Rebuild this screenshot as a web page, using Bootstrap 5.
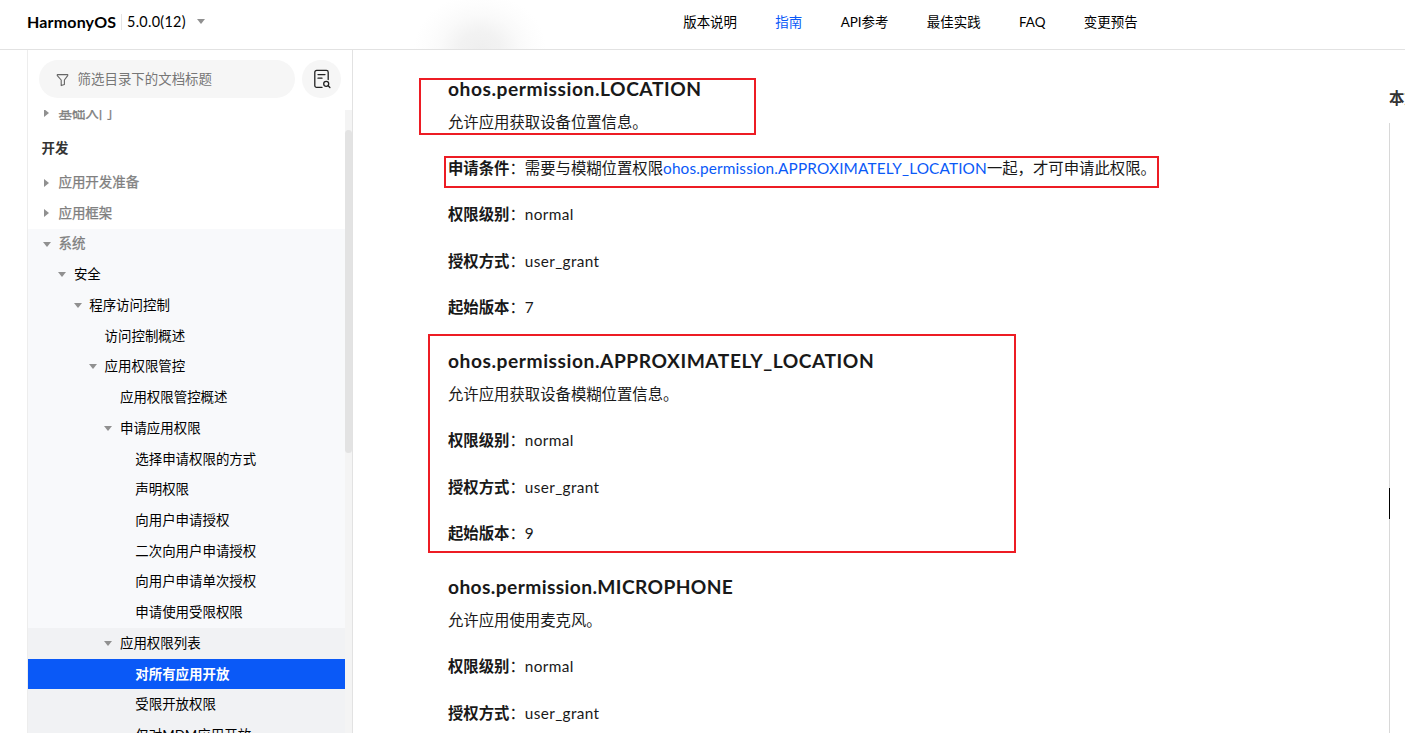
<!DOCTYPE html>
<html lang="zh-CN">
<head>
<meta charset="utf-8">
<meta name="viewport" content="width=device-width, initial-scale=1">
<title>对所有应用开放 - HarmonyOS</title>
<link href="https://cdn.jsdelivr.net/npm/bootstrap@5.3.0/dist/css/bootstrap.min.css" rel="stylesheet">
<style>
html,body{height:100%}
body{font-family:Lato,"Noto Sans CJK SC",sans-serif;font-size:15.36px;line-height:23.04px;color:#191919;background:#fff;overflow:hidden}
.topbar{height:50px;border-bottom:1px solid #e2e2e2;padding-bottom:6px;font-size:13.44px;color:#000;background:radial-gradient(ellipse 66px 56px at 480px 49px,#efefef 0,#f2f2f2 30%,#fafafa 60%,#fdfdfd 80%,#fff 100%)}
.brand{width:90px;margin-left:27px;font-size:16px;font-weight:700;letter-spacing:.17px}
.ver{border-left:1px solid #e5e5e5;height:16px;line-height:15px;padding-left:5px;width:76px;font-size:14.4px;letter-spacing:.3px}
.caret-d{border:4px solid transparent;border-top:5px solid #909090;border-bottom:0;width:0;height:0}
.caret-r{border:4px solid transparent;border-left:5px solid #909090;border-right:0;width:0;height:0}
.topnav{position:absolute;left:683.2px;top:11px;gap:38.4px}
.topnav a{color:#000;text-decoration:none;white-space:nowrap}
.topnav a.on,.doc a{color:#0a59f7;text-decoration:none}
.frame{height:683px}
.side{width:326px;margin-left:27px;border-left:1px solid #ededed;border-right:1px solid #e2e2e2}
.tools{padding:10px 0 12px 11px;gap:7px}
.search{width:256px;height:38px;background:#f6f6f6;color:#777;font-size:13.44px;padding:1px 0 0 16px;gap:7.6px}
.round{width:39px;height:38px;background:#f6f6f6}
.tree{font-size:13.44px;color:#000;height:623px}
.rows{margin-top:-11.9px;width:317px}
.rowi{height:30.72px;white-space:nowrap;gap:7.6px}
.rowi .ic{width:8px;display:flex;justify-content:center;flex:none}
.top1{color:#808080;-webkit-text-stroke:.3px #808080}
.cat{height:38.4px;padding-left:13.5px;font-weight:700;color:#333}
.l0{padding-left:14.9px}.l1{padding-left:30.3px}.l2{padding-left:45.6px}.l3{padding-left:61px}.l4{padding-left:76.4px}.l5{padding-left:91.7px}
.open{background:#f8f9fb}.sub{background:#f1f2f4}
.cur{background:#0a59f7;color:#fff;font-weight:700}
.track{width:7px;background:#f4f4f4;padding-top:20px}
.thumb{height:323px;background:#e3e3e3;border-radius:4px}
.doc{padding:25px 0 0 95px;width:1036px}
.doc h4{font-size:19.2px;line-height:28.8px;font-weight:700;margin:0 0 7.4px;letter-spacing:.55px}
.doc h4.mic{letter-spacing:.38px}
.doc p{margin:0 0 23.1px;white-space:nowrap}
.doc section p:last-child{margin-bottom:28.3px}
.doc .lat{letter-spacing:.35px}
.doc a.lat{letter-spacing:.14px}
.redbox{position:absolute;border:2px solid #ed1c24;pointer-events:none}
.r1{left:419px;top:78px;width:337px;height:57px}
.r2{left:444px;top:156px;width:715px;height:32px}
.r3{left:428px;top:334px;width:588px;height:219px}
.toc{width:16px;padding-top:37px}
.toc .ttl{font-weight:700;font-size:15.36px;white-space:nowrap;color:#333;height:36px}
.rail{width:1px;background:#d8d8d8;height:611px;padding-top:365px}
.rail i{display:block;height:31px;background:#000}
</style>
</head>
<body>
<header class="topbar d-flex align-items-center position-relative">
  <div class="brand text-nowrap lh-1">HarmonyOS</div>
  <div class="ms-1 ver">5.0.0(12)</div>
  <i class="caret-d"></i>
  <nav class="topnav d-flex"><a>版本说明</a><a class="on">指南</a><a>API参考</a><a>最佳实践</a><a>FAQ</a><a>变更预告</a></nav>
</header>
<div class="frame d-flex overflow-hidden">
  <aside class="side flex-shrink-0">
    <div class="tools d-flex">
      <div class="search rounded-pill d-flex align-items-center">
        <svg width="15" height="14" viewBox="0 0 15 14" fill="none" stroke="#666" stroke-width="1.1" stroke-linejoin="round"><path d="M2.6 1.6h9.8q.7.3.3 1L9.4 7v4.600l-3.200 1V7L2.300 2.600q-.3-.8.3-1z"/></svg>
        <span>筛选目录下的文档标题</span>
      </div>
      <div class="round rounded-pill d-flex align-items-center justify-content-center">
        <svg width="18" height="20" viewBox="0 0 18 20" fill="none" stroke="#222" stroke-width="1.3" stroke-linecap="round"><path d="M9 18.400H3.600a1.800 1.800 0 0 1-1.800-1.800V3.200a1.800 1.800 0 0 1 1.800-1.800h9.800a1.800 1.800 0 0 1 1.800 1.800V10.500M5 5.600h7M5 9.200h4"/><circle cx="13.200" cy="14.800" r="2.500"/><path d="m15.200 16.800 1.700 1.700"/></svg>
      </div>
    </div>
    <div class="tree d-flex overflow-hidden">
      <div class="rows flex-shrink-0">
        <div class="rowi top1 l0 d-flex align-items-center"><span class="ic"><i class="caret-r"></i></span>基础入门</div>
        <div class="cat d-flex align-items-center">开发</div>
        <div class="rowi top1 l0 d-flex align-items-center"><span class="ic"><i class="caret-r"></i></span>应用开发准备</div>
        <div class="rowi top1 l0 d-flex align-items-center"><span class="ic"><i class="caret-r"></i></span>应用框架</div>
        <div class="open">
          <div class="rowi top1 l0 d-flex align-items-center"><span class="ic"><i class="caret-d"></i></span>系统</div>
          <div class="rowi l1 d-flex align-items-center"><span class="ic"><i class="caret-d"></i></span>安全</div>
          <div class="rowi l2 d-flex align-items-center"><span class="ic"><i class="caret-d"></i></span>程序访问控制</div>
          <div class="rowi l3 d-flex align-items-center"><span class="ic"></span>访问控制概述</div>
          <div class="rowi l3 d-flex align-items-center"><span class="ic"><i class="caret-d"></i></span>应用权限管控</div>
          <div class="rowi l4 d-flex align-items-center"><span class="ic"></span>应用权限管控概述</div>
          <div class="rowi l4 d-flex align-items-center"><span class="ic"><i class="caret-d"></i></span>申请应用权限</div>
          <div class="rowi l5 d-flex align-items-center"><span class="ic"></span>选择申请权限的方式</div>
          <div class="rowi l5 d-flex align-items-center"><span class="ic"></span>声明权限</div>
          <div class="rowi l5 d-flex align-items-center"><span class="ic"></span>向用户申请授权</div>
          <div class="rowi l5 d-flex align-items-center"><span class="ic"></span>二次向用户申请授权</div>
          <div class="rowi l5 d-flex align-items-center"><span class="ic"></span>向用户申请单次授权</div>
          <div class="rowi l5 d-flex align-items-center"><span class="ic"></span>申请使用受限权限</div>
          <div class="sub">
            <div class="rowi l4 d-flex align-items-center"><span class="ic"><i class="caret-d"></i></span>应用权限列表</div>
            <div class="rowi l5 cur d-flex align-items-center"><span class="ic"></span>对所有应用开放</div>
            <div class="rowi l5 d-flex align-items-center"><span class="ic"></span>受限开放权限</div>
            <div class="rowi l5 d-flex align-items-center"><span class="ic"></span>仅对MDM应用开放</div>
          </div>
        </div>
      </div>
      <div class="track"><div class="thumb"></div></div>
    </div>
  </aside>
  <main class="doc flex-shrink-0">
    <section>
      <h4>ohos.permission.LOCATION</h4>
      <p>允许应用获取设备位置信息。</p>
      <p><strong>申请条件</strong>：需要与模糊位置权限<a class="lat">ohos.permission.APPROXIMATELY_LOCATION</a>一起，才可申请此权限。</p>
      <p><strong>权限级别</strong>：<span class="lat">normal</span></p>
      <p><strong>授权方式</strong>：<span class="lat">user_grant</span></p>
      <p><strong>起始版本</strong>：<span class="lat">7</span></p>
    </section>
    <section>
      <h4>ohos.permission.APPROXIMATELY_LOCATION</h4>
      <p>允许应用获取设备模糊位置信息。</p>
      <p><strong>权限级别</strong>：<span class="lat">normal</span></p>
      <p><strong>授权方式</strong>：<span class="lat">user_grant</span></p>
      <p><strong>起始版本</strong>：<span class="lat">9</span></p>
    </section>
    <section>
      <h4 class="mic">ohos.permission.MICROPHONE</h4>
      <p>允许应用使用麦克风。</p>
      <p><strong>权限级别</strong>：<span class="lat">normal</span></p>
      <p><strong>授权方式</strong>：<span class="lat">user_grant</span></p>
    </section>
  </main>
  <aside class="toc flex-shrink-0 overflow-hidden">
    <div class="ttl">本文导读</div>
    <div class="rail"><i></i></div>
  </aside>
</div>
<div class="redbox r1"></div><div class="redbox r2"></div><div class="redbox r3"></div>
<script src="https://cdn.jsdelivr.net/npm/bootstrap@5.3.0/dist/js/bootstrap.bundle.min.js"></script>
</body>
</html>
